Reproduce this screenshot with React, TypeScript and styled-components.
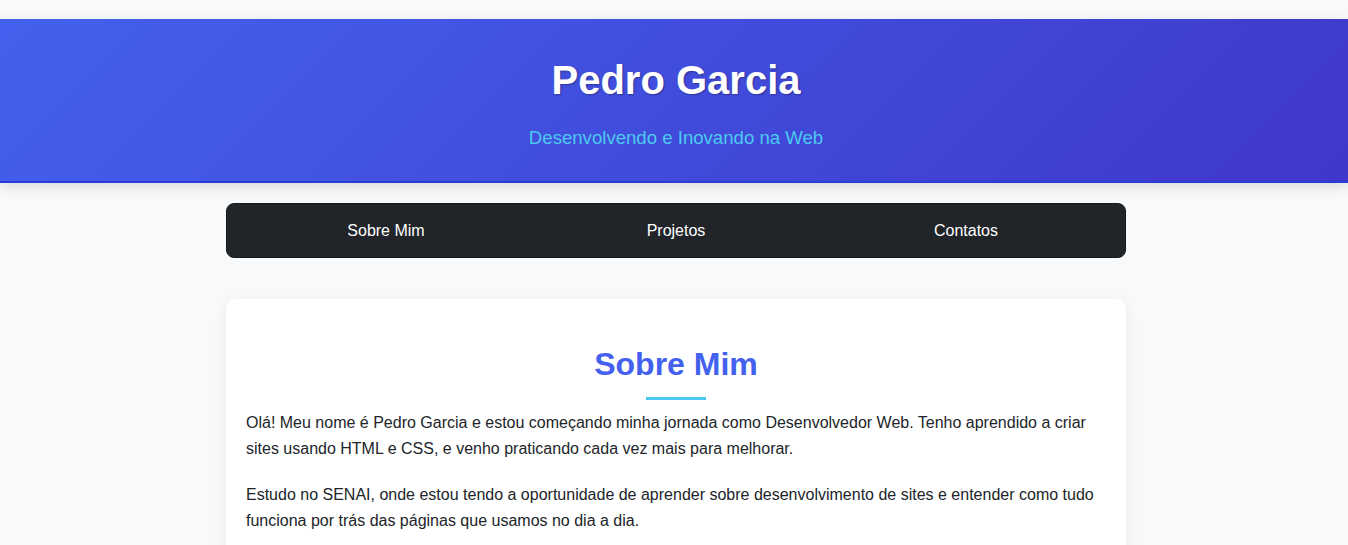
import React from "react";
import styled, { createGlobalStyle } from "styled-components";

const GlobalStyle = createGlobalStyle`
  * { box-sizing: border-box; }
  html, body {
    margin: 0;
    padding: 0;
    background: #f8f9fa;
    font-family: "Liberation Sans", Arial, sans-serif;
    color: #212529;
  }
`;

const Page = styled.div`
  padding-top: 19px;
  padding-bottom: 40px;
`;

const Header = styled.header`
  background: linear-gradient(135deg, #4361ee 0%, #3f37c9 100%);
  border-bottom: 2px solid #2a3bd6;
  box-shadow: 0 4px 12px rgba(0, 0, 0, 0.12);
  padding: 38px 20px 32px 24px;
  text-align: center;
`;

const Title = styled.h1`
  margin: 0;
  font-size: 40px;
  line-height: 46px;
  font-weight: 700;
  color: #ffffff;
  text-shadow: 1px 1px 2px rgba(0, 0, 0, 0.3);
`;

const Subtitle = styled.p`
  margin: 24px 0 0;
  font-size: 18.6px;
  line-height: normal;
  color: #4cc9f0;
`;

const Main = styled.main`
  display: flex;
  flex-direction: column;
  align-items: center;
  padding-left: 4px;
`;

const Nav = styled.nav`
  width: 900px;
  margin-top: 20px;
  background: #212529;
  border: 1px solid #16191c;
  border-radius: 8px;
`;

const NavList = styled.ul`
  display: flex;
  list-style: none;
  margin: 0;
  padding: 0 14px;
`;

const NavItem = styled.li`
  flex: 1;
  text-align: center;
`;

const NavLink = styled.a`
  display: block;
  padding: 18.3px 0 16.3px;
  color: #ffffff;
  text-decoration: none;
  font-size: 16px;
  line-height: 18.4px;
`;

const Card = styled.section`
  width: 900px;
  margin-top: 41px;
  background: #ffffff;
  border-radius: 10px;
  box-shadow: 0 4px 14px rgba(0, 0, 0, 0.07);
  padding: 20px 20px 30px;
`;

const SectionTitle = styled.h2`
  position: relative;
  margin: 27px 0 10px;
  padding-bottom: 17px;
  font-size: 32px;
  line-height: normal;
  font-weight: 700;
  text-align: center;
  color: #4361ee;

  &::after {
    content: "";
    position: absolute;
    left: 50%;
    bottom: 0;
    width: 60px;
    height: 3px;
    transform: translateX(-50%);
    background: #4cc9f0;
  }
`;

const Paragraph = styled.p`
  margin: 0 0 21px;
  font-size: 16px;
  line-height: 25.6px;
  color: #212529;
`;

export default function App() {
  return (
    <>
      <GlobalStyle />
      <Page>
        <Header>
          <Title>Pedro Garcia</Title>
          <Subtitle>Desenvolvendo e Inovando na Web</Subtitle>
        </Header>
        <Main>
          <Nav>
            <NavList>
              <NavItem>
                <NavLink href="#sobre">Sobre Mim</NavLink>
              </NavItem>
              <NavItem>
                <NavLink href="#projetos">Projetos</NavLink>
              </NavItem>
              <NavItem>
                <NavLink href="#contatos">Contatos</NavLink>
              </NavItem>
            </NavList>
          </Nav>
          <Card id="sobre">
            <SectionTitle>Sobre Mim</SectionTitle>
            <Paragraph>
              Olá! Meu nome é Pedro Garcia e estou começando minha jornada como
              Desenvolvedor Web. Tenho aprendido a criar sites usando HTML e CSS,
              e venho praticando cada vez mais para melhorar.
            </Paragraph>
            <Paragraph>
              Estudo no SENAI, onde estou tendo a oportunidade de aprender sobre
              desenvolvimento de sites e entender como tudo funciona por trás das
              páginas que usamos no dia a dia.
            </Paragraph>
          </Card>
        </Main>
      </Page>
    </>
  );
}
